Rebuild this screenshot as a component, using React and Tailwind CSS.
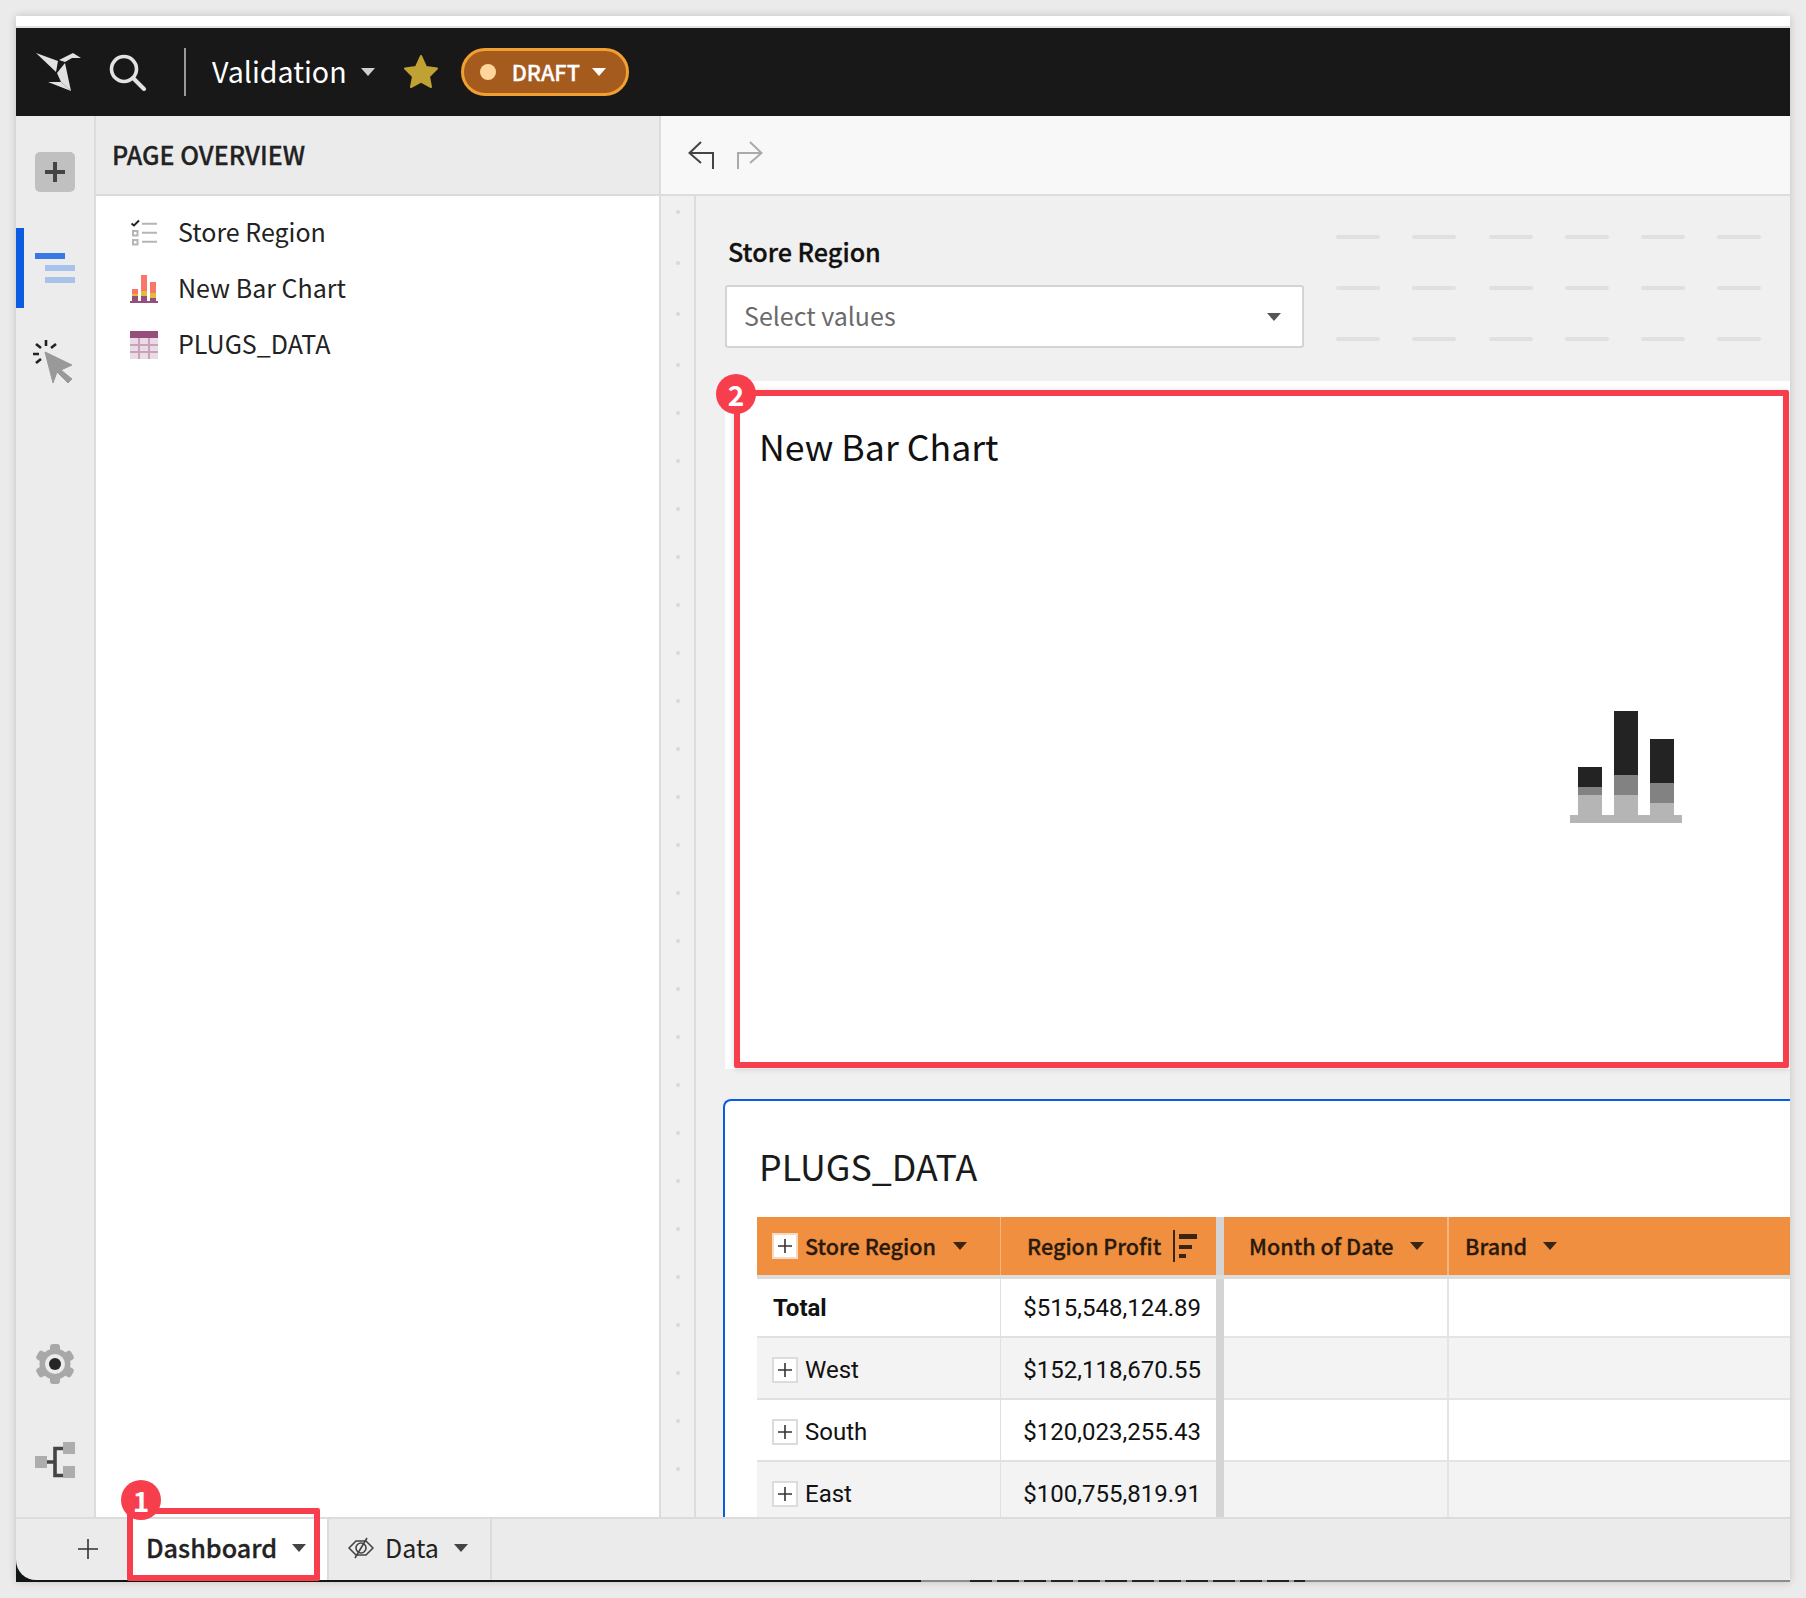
const Caret = ({ c = "#444", w = 14, h = 8 }) => (
  <svg width={w} height={h} viewBox="0 0 14 8" className="shrink-0"><polygon points="0,0 14,0 7,8" fill={c} /></svg>
);

const PlusBox = ({ header }) => (
  <span className={`flex h-[26px] w-[26px] shrink-0 items-center justify-center border-2 bg-white ${header ? "border-[#f5d9c0]" : "border-[#dcdcdc]"}`}>
    <svg width="14" height="14" viewBox="0 0 14 14"><path d="M7 0v14M0 7h14" stroke="#333" strokeWidth="1.6" /></svg>
  </span>
);

const Logo = () => (
  <svg width="48" height="42" viewBox="34 51 48 42" className="shrink-0">
    <polygon points="36,53 58,61 56,72" fill="#e2e2e2" />
    <polygon points="59,60 65,57 73,53 81,58 72,58 65,62" fill="#e2e2e2" />
    <polygon points="57,73 65,63 71,91 61,82" fill="#e2e2e2" />
    <polygon points="48,82 61,82 71,91" fill="#e2e2e2" />
  </svg>
);

const Search = () => (
  <svg width="38" height="38" viewBox="109 52 38 38" className="shrink-0">
    <circle cx="124" cy="68" r="12.5" fill="none" stroke="#e2e2e2" strokeWidth="3.6" />
    <path d="M133 77 L144 88" stroke="#e2e2e2" strokeWidth="4" strokeLinecap="round" />
  </svg>
);

const Star = () => (
  <svg width="36" height="36" viewBox="0 0 36 36" className="shrink-0">
    <polygon points="18,2 23,13 34,14.5 26,22.5 28,33 18,27.5 8,33 10,22.5 2,14.5 13,13" fill="#bfa233" stroke="#bfa233" strokeWidth="2" strokeLinejoin="round" />
  </svg>
);

const Undo = ({ c, flip }) => (
  <svg width="26" height="28" viewBox="0 0 26 28" className={flip ? "-scale-x-100" : ""}>
    <path d="M13 1 L1.5 12 L13 22 M1.5 12 H25 V28" fill="none" stroke={c} strokeWidth="2" />
  </svg>
);

const RailPlus = () => (
  <div className="flex h-10 w-10 items-center justify-center rounded-[5px] bg-[#c0c0c0]">
    <svg width="20" height="20" viewBox="0 0 20 20"><path d="M10 0v20M0 10h20" stroke="#444" strokeWidth="4" /></svg>
  </div>
);

const Overview = () => (
  <svg width="40" height="30" viewBox="0 0 40 30">
    <rect x="0" y="0" width="30" height="6" fill="#3a78e6" />
    <rect x="10" y="12" width="30" height="6" fill="#a8c2ec" />
    <rect x="10" y="24" width="30" height="6" fill="#a8c2ec" />
  </svg>
);

const Cursor = () => (
  <svg width="44" height="46" viewBox="32 339 44 46">
    <path d="M36 345l5 4M46 341v6M51 349l5-4M33 355h6M36 364l5-4" stroke="#222" strokeWidth="2.6" fill="none" />
    <polygon points="45,353 72,366 61,371 72,380 68,384 57,373 53,384" fill="#999" stroke="#999" strokeWidth="1" strokeLinejoin="round" />
  </svg>
);

const Gear = () => (
  <svg width="40" height="40" viewBox="-20 -20 40 40">
    {[0, 60, 120, 180, 240, 300].map((a) => (
      <rect key={a} x="-5" y="-20" width="10" height="10" rx="3" fill="#a8a8a8" transform={`rotate(${a})`} />
    ))}
    <circle r="15.5" fill="#a8a8a8" />
    <circle r="10" fill="#ebebeb" />
    <circle r="6" fill="#262626" />
  </svg>
);

const Tree = () => (
  <svg width="40" height="36" viewBox="35 1442 40 36">
    <path d="M47 1462h8M63 1448.5H55V1475.5H63" fill="none" stroke="#444" strokeWidth="3.6" />
    <rect x="35" y="1456" width="12" height="12" fill="#adadad" />
    <rect x="63" y="1442" width="12" height="12" fill="#adadad" />
    <rect x="63" y="1466" width="12" height="12" fill="#adadad" />
  </svg>
);

const ListIcon = () => (
  <svg width="28" height="28" viewBox="130 218 28 28">
    <path d="M131.5 222.5l2.5 2 5-5" fill="none" stroke="#222" strokeWidth="2" />
    <path d="M142 222.8h15M142 231.8h15M142 240.8h15" stroke="#b5b5b5" strokeWidth="2" />
    <rect x="133" y="230" width="4.5" height="4.5" fill="#fff" stroke="#b5b5b5" strokeWidth="2" />
    <rect x="133" y="239" width="4.5" height="4.5" fill="#fff" stroke="#b5b5b5" strokeWidth="2" />
  </svg>
);

const BarIcon = () => (
  <svg width="28" height="28" viewBox="130 274 28 28">
    <rect x="132" y="288" width="6" height="5" fill="#f8766a" />
    <rect x="132" y="293" width="6" height="2" fill="#e0bb3c" />
    <rect x="132" y="295" width="6" height="5" fill="#964f7b" />
    <rect x="141" y="274" width="6" height="16" fill="#f8766a" />
    <rect x="141" y="290" width="6" height="5" fill="#e0bb3c" />
    <rect x="141" y="295" width="6" height="5" fill="#964f7b" />
    <rect x="150" y="281" width="6" height="11" fill="#f8766a" />
    <rect x="150" y="292" width="6" height="5" fill="#e0bb3c" />
    <rect x="150" y="297" width="6" height="3" fill="#964f7b" />
    <rect x="130" y="300" width="28" height="2" fill="#964f7b" />
  </svg>
);

const TableIcon = () => (
  <svg width="28" height="28" viewBox="130 330 28 28">
    <rect x="130" y="330" width="28" height="28" fill="#e9dce5" />
    <rect x="130" y="330" width="28" height="7" fill="#964f7b" />
    <path d="M130 344h28M130 351h28M139 337v21M149 337v21" stroke="#c8a2ba" strokeWidth="2" />
  </svg>
);

const ChartPlaceholder = () => (
  <svg width="112" height="112" viewBox="1570 711 112 112">
    <rect x="1578" y="767" width="24" height="20" fill="#232323" />
    <rect x="1578" y="787" width="24" height="8" fill="#828282" />
    <rect x="1578" y="795" width="24" height="20" fill="#b5b5b5" />
    <rect x="1614" y="711" width="24" height="64" fill="#232323" />
    <rect x="1614" y="775" width="24" height="20" fill="#828282" />
    <rect x="1614" y="795" width="24" height="20" fill="#b5b5b5" />
    <rect x="1650" y="739" width="24" height="44" fill="#232323" />
    <rect x="1650" y="783" width="24" height="20" fill="#828282" />
    <rect x="1650" y="803" width="24" height="12" fill="#b5b5b5" />
    <rect x="1570" y="815" width="112" height="8" fill="#b5b5b5" />
  </svg>
);

const SortIcon = () => (
  <svg width="24" height="32" viewBox="1173 1231 24 32" className="shrink-0">
    <rect x="1173" y="1231" width="2" height="32" fill="#3a2412" />
    <rect x="1179" y="1235" width="18" height="5" fill="#3a2412" />
    <rect x="1179" y="1246" width="13" height="4" fill="#3a2412" />
    <rect x="1179" y="1255" width="7" height="4" fill="#3a2412" />
  </svg>
);

const EyeOff = () => (
  <svg width="26" height="22" viewBox="0 0 26 22" className="shrink-0">
    <path d="M1 11 L8 4 H18 L25 11 L18 18 H8 Z" fill="none" stroke="#444" strokeWidth="1.6" strokeLinejoin="round" />
    <circle cx="13" cy="11" r="5" fill="none" stroke="#444" strokeWidth="1.6" />
    <path d="M19 1 L7 21" stroke="#444" strokeWidth="1.6" />
  </svg>
);

const Badge = ({ n, className }) => (
  <div className={`absolute z-20 flex h-10 w-10 items-center justify-center rounded-full bg-[#f73e4d] text-[28px] font-bold leading-none text-white ${className}`}>{n}</div>
);

const rows = [
  { label: "Total", value: "$515,548,124.89", bold: true, bg: "bg-white", h: "h-[59px]", pt: "pt-px" },
  { label: "West", value: "$152,118,670.55", bg: "bg-[#f3f3f3]", h: "h-[62px]", pt: "pt-1" },
  { label: "South", value: "$120,023,255.43", bg: "bg-white", h: "h-[62px]", pt: "pt-1" },
  { label: "East", value: "$100,755,819.91", bg: "bg-[#f3f3f3]", h: "h-[62px]", pt: "pt-1" },
];

const Dots = ({ n, gap }) => (
  <div className={`flex flex-col items-center ${gap}`}>
    {Array.from({ length: n }).map((_, i) => (
      <span key={i} className="h-1 w-1 rounded-full bg-[#d8d8d8]" />
    ))}
  </div>
);

const DashRow = () => (
  <div className="flex gap-[32.3px]">
    {[0, 1, 2, 3, 4, 5].map((i) => (
      <span key={i} className="h-1 w-11 rounded-sm bg-[#e0e0e0]" />
    ))}
  </div>
);

const ListItem = ({ icon, label }) => (
  <div className="flex h-[56px] items-center gap-5 pl-[34px] text-[25px] text-[#222]">
    {icon}
    <span className="pb-[2px]">{label}</span>
  </div>
);

export default function App() {
  return (
    <div className="h-[1598px] overflow-hidden bg-[#ebebeb] pl-4 pt-4 font-['Noto_Sans_CJK_SC',sans-serif]">
      <div className="flex h-[1566px] w-[1774px] flex-col shadow-[0_0_8px_rgba(0,0,0,0.18)]">
        <div className="h-[10px] bg-white" />
        <div className="h-[2px] bg-[#e2e2e2]" />
        {/* Top bar */}
        <div className="flex h-[88px] items-center bg-[#181818] text-white">
          <div className="ml-[18px]"><Logo /></div>
          <div className="ml-[27px]"><Search /></div>
          <div className="ml-[37px] h-12 w-[2px] bg-[#999]" />
          <span className="ml-[26px] pb-px text-[28.6px] leading-none">Validation</span>
          <div className="ml-[14px]"><Caret c="#cfcfcf" /></div>
          <div className="ml-[28px]"><Star /></div>
          <div className="ml-[22px] flex h-12 w-[168px] items-center rounded-full border-[3px] border-[#f0a030] bg-[#a55a1e]">
            <span className="ml-4 h-4 w-4 rounded-full bg-[#ffd699]" />
            <span className="ml-4 text-[21.7px] font-medium leading-none [-webkit-text-stroke:0.3px_currentColor]">DRAFT</span>
            <div className="ml-3"><Caret c="#fff" /></div>
          </div>
        </div>

        {/* Middle */}
        <div className="flex h-[1401px]">
          <div className="flex w-[80px] shrink-0 flex-col border-r-2 border-[#dcdcdc] bg-[#ececec]">
            <div className="ml-[19px] mt-9"><RailPlus /></div>
            <div className="mt-9 flex h-20 items-center border-l-8 border-[#0b5ce0] pl-[11px]"><Overview /></div>
            <div className="ml-4 mt-[30px]"><Cursor /></div>
            <div className="ml-[19px] mt-auto"><Gear /></div>
            <div className="mb-[39px] ml-[19px] mt-[58px]"><Tree /></div>
          </div>

          <div className="flex w-[565px] shrink-0 flex-col border-r-2 border-[#dcdcdc] bg-white">
            <div className="flex h-[80px] shrink-0 items-center border-b-2 border-[#dcdcdc] bg-[#ebebeb] pb-[2px] pl-4 text-[25px] font-medium leading-none text-[#222] [-webkit-text-stroke:0.3px_currentColor]">PAGE OVERVIEW</div>
            <div className="pt-[9px]">
              <ListItem icon={<ListIcon />} label="Store Region" />
              <ListItem icon={<BarIcon />} label="New Bar Chart" />
              <ListItem icon={<TableIcon />} label="PLUGS_DATA" />
            </div>
          </div>

          <div className="flex min-w-0 flex-1 flex-col overflow-hidden">
            <div className="flex h-[80px] shrink-0 items-center gap-[23px] border-b-2 border-[#dcdcdc] bg-[#f8f8f8] pl-[27px]">
              <Undo c="#444" />
              <Undo c="#aaa" flip />
            </div>
            <div className="flex min-h-0 flex-1 bg-[#f0f0f0]">
              <div className="flex w-[35px] shrink-0 flex-col gap-[44px] border-r-2 border-[#dcdcdc] pt-[14px]">
                <Dots n={4} gap="gap-[47px]" />
                <Dots n={23} gap="gap-[44px]" />
              </div>
              <div className="min-w-0 flex-1 overflow-hidden">
                {/* Filter */}
                <div className="flex h-[185px] pl-[29px]">
                  <div className="w-[579px] shrink-0 pt-[40px]">
                    <div className="flex h-[32px] items-center pl-[3px] text-[25.2px] font-medium leading-none text-[#111] [-webkit-text-stroke:0.3px_currentColor]">Store Region</div>
                    <div className="mt-[17px] flex h-[63px] items-center justify-between rounded-[3px] border-2 border-[#d4d4d4] bg-white pl-[17px] pr-[21px] text-[25px] text-[#6b6b6b]">
                      <span className="pb-[2px]">Select values</span>
                      <Caret c="#555" />
                    </div>
                  </div>
                  <div className="ml-[32px] flex flex-col gap-[47px] pt-[39px]">
                    <DashRow /><DashRow /><DashRow />
                  </div>
                </div>

                {/* Chart card */}
                <div className="relative ml-[29px] flex h-[688px] w-[1802px] flex-col bg-white">
                  <div className="mt-[45px] flex h-10 items-center pl-[34px] text-[35.7px] leading-none text-[#111]">New Bar Chart</div>
                  <div className="flex flex-1 items-center justify-center pb-[1px]"><ChartPlaceholder /></div>
                  <div className="absolute left-[9px] top-[9px] h-[678px] w-[1055px] rounded-[2px] border-[6px] border-[#f73e4d] shadow-[0_1px_6px_rgba(0,0,0,0.15)]" />
                  <Badge n="2" className="-left-[9px] -top-[7px]" />
                </div>

                {/* Table card */}
                <div className="ml-[27px] mt-[30px] rounded-tl-lg border-l-2 border-t-2 border-[#0a5ce6] bg-white pt-[43px]">
                  <div className="flex h-11 items-center pl-[34px] text-[35.8px] leading-none text-[#1a1a1a]">PLUGS_DATA</div>
                  <div className="ml-[32px] mt-[29px]">
                    <div className="flex h-[58px] bg-[#f08f40] text-[21.6px] font-medium text-[#2a1a0c] [-webkit-text-stroke:0.3px_currentColor]">
                      <div className="flex w-[244px] shrink-0 items-center border-r border-[#f5b681] pl-[15px]">
                        <PlusBox header />
                        <span className="ml-[7px] leading-none">Store Region</span>
                        <div className="ml-[17px]"><Caret c="#3a2412" /></div>
                      </div>
                      <div className="flex w-[215px] shrink-0 items-center pl-[26px]">
                        <span className="leading-none">Region Profit</span>
                        <div className="ml-[12px]"><SortIcon /></div>
                      </div>
                      <div className="w-2 shrink-0 bg-[#d4d4d4]" />
                      <div className="flex w-[225px] shrink-0 items-center border-r-2 border-[#f5b681] pl-[25px]">
                        <span className="leading-none">Month of Date</span>
                        <div className="ml-4"><Caret c="#3a2412" /></div>
                      </div>
                      <div className="flex flex-1 items-center pl-4">
                        <span className="leading-none">Brand</span>
                        <div className="ml-4"><Caret c="#3a2412" /></div>
                      </div>
                    </div>
                    <div className="h-1 bg-[#dcdcdc]" />
                    {rows.map((r) => (
                      <div key={r.label} className={`flex ${r.h} font-['Roboto',sans-serif] text-[24px] text-[#111] ${r.bg}`}>
                        <div className={`flex w-[244px] shrink-0 items-center gap-[7px] border-b-2 border-r border-[#e0e0e0] pl-[15px] ${r.pt} ${r.bold ? "font-bold" : ""}`}>
                          {!r.bold && <PlusBox />}
                          <span className={r.bold ? "ml-px" : ""}>{r.label}</span>
                        </div>
                        <div className={`flex w-[215px] shrink-0 items-center justify-end border-b-2 border-[#e0e0e0] pr-[15px] ${r.pt}`}>{r.value}</div>
                        <div className="w-2 shrink-0 bg-[#d4d4d4]" />
                        <div className="w-[225px] shrink-0 border-b-2 border-r-2 border-[#e4e4e4]" />
                        <div className="flex-1 border-b-2 border-[#e4e4e4]" />
                      </div>
                    ))}
                  </div>
                </div>
              </div>
            </div>
          </div>
        </div>

        {/* Footer */}
        <div className="h-[65px] bg-[linear-gradient(90deg,#0f1614_905px,#8c8c8c_905px)]">
          <div className="relative flex h-[63px] items-stretch rounded-bl-[20px] border-t-2 border-[#dcdcdc] bg-[#ebebeb] text-[24px] text-[#222]">
            <div className="flex w-[111px] shrink-0 items-center pb-[2px] pl-[62px]">
              <svg width="20" height="20" viewBox="0 0 20 20"><path d="M10 0v20M0 10h20" stroke="#333" strokeWidth="1.6" /></svg>
            </div>
            <div className="flex w-[200px] shrink-0 items-center bg-white pb-[4px] pl-[19px] text-[25.2px] font-medium">
              <span className="leading-none [-webkit-text-stroke:0.3px_currentColor]">Dashboard</span>
              <div className="ml-[15px]"><Caret c="#444" /></div>
            </div>
            <div className="flex w-[165px] shrink-0 items-center border-x-2 border-[#dcdcdc] pb-[4px] pl-[19px] text-[25px]">
              <EyeOff />
              <span className="ml-[11px] leading-none">Data</span>
              <div className="ml-[15px]"><Caret c="#444" /></div>
            </div>
            <div className="absolute -top-[11px] left-[111px] z-10 h-[73px] w-[193px] rounded-[2px] border-[6px] border-[#f73e4d]" />
            <Badge n="1" className="-top-[39px] left-[105px]" />
          </div>
          <div className="ml-[954px] h-[2px] w-[335px] bg-[repeating-linear-gradient(90deg,#222_0_22px,#9a9a9a_22px_27px)]" />
        </div>
      </div>
    </div>
  );
}
